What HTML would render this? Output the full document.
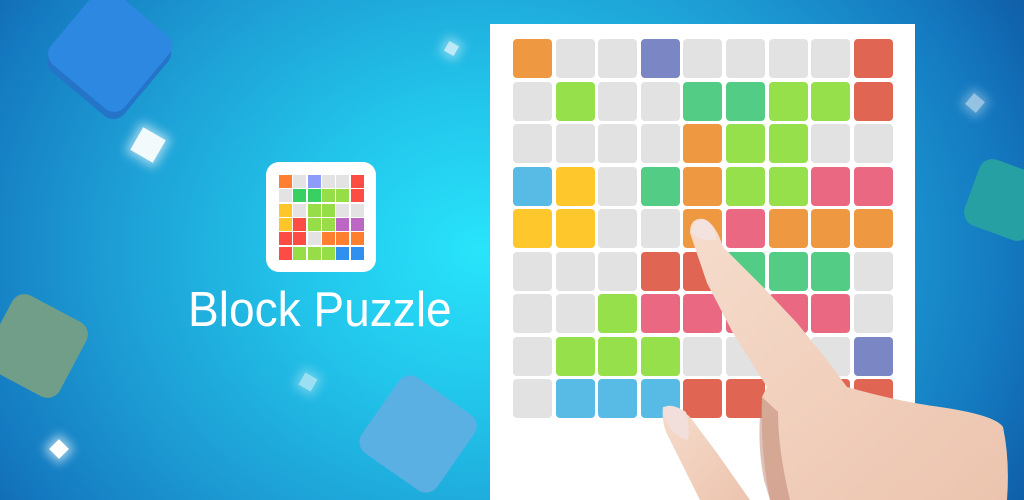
<!DOCTYPE html>
<html><head><meta charset="utf-8"><style>
*{margin:0;padding:0;box-sizing:border-box}
body{width:1024px;height:500px;overflow:hidden;position:relative;font-family:"Liberation Sans",sans-serif;
background:radial-gradient(ellipse 620px 520px at 480px 250px,#28e4fb 0%,#22c4ea 30%,#1d9dd4 60%,#1479c0 85%,#0f5ea8 100%);}
.d{position:absolute;border-radius:14px}
.g{position:absolute;background:#fff;box-shadow:0 0 10px 4px rgba(255,255,255,.6)}
#panel{position:absolute;left:490px;top:24px;width:425px;height:476px;background:#fff}
.c{position:absolute;width:39px;height:39px;border-radius:4px}
#icon{position:absolute;left:266px;top:162px;width:110px;height:110px;background:#fff;border-radius:13px}
.ic{position:absolute;width:13px;height:13px}
h1{position:absolute;left:188px;top:282px;font-size:49px;font-weight:normal;color:#fff;transform:scaleX(.94);transform-origin:left top;white-space:nowrap}
</style></head><body>
<div class="d" style="left:62px;top:2px;width:96px;height:96px;background:#2c88e0;transform:rotate(40deg);box-shadow:4px 6px 0 #2474c8"></div>
<div class="d" style="left:-6px;top:304px;width:84px;height:84px;background:#709e88;transform:rotate(28deg)"></div>
<div class="d" style="left:372px;top:388px;width:92px;height:92px;background:#5ab0e2;transform:rotate(35deg)"></div>
<div class="d" style="left:970px;top:165px;width:70px;height:70px;background:#26a0a2;transform:rotate(20deg)"></div>
<div class="g" style="left:135px;top:132px;width:26px;height:26px;transform:rotate(30deg);opacity:.95"></div>
<div class="g" style="left:446px;top:43px;width:11px;height:11px;transform:rotate(30deg);opacity:.7"></div>
<div class="g" style="left:52px;top:442px;width:14px;height:14px;transform:rotate(45deg)"></div>
<div class="g" style="left:301px;top:375px;width:14px;height:14px;transform:rotate(30deg);opacity:.55"></div>
<div class="g" style="left:968px;top:96px;width:14px;height:14px;transform:rotate(40deg);opacity:.55"></div>

<div id="icon"></div>
<h1>Block Puzzle</h1>
<div id="panel"></div>

<svg style="position:absolute;left:0;top:0" width="1024" height="500">
<defs><linearGradient id="sk" x1="0" y1="0" x2="1" y2="1"><stop offset="0" stop-color="#f6dccc"/><stop offset="1" stop-color="#ecc4ae"/></linearGradient></defs>
<path d="M690,233 Q690,217 704,219 Q716,224 723,247 L763,287 L797,323 L827,360 L847,387 Q900,402 940,407 Q995,415 1003,427 Q1010,460 1007,500 L770,500 Q760,450 762,397 L767,387 L733,333 L707,283 Z" fill="url(#sk)"/>
<path d="M762,397 Q756,440 764,480 L770,500 L790,500 Q778,450 778,412 Z" fill="#b47866" opacity=".45"/>
<path d="M663,407 Q676,404 690,417 L717,453 L750,500 L700,500 L670,440 Q661,425 663,407 Z" fill="url(#sk)"/>
<path d="M691,232 Q694,216 708,221 Q716,230 716,240 Q700,242 691,232 Z" fill="#f4e2de"/>
<path d="M663,408 Q670,402 686,412 Q690,425 688,440 Q668,436 663,408 Z" fill="#f2dedb"/>
</svg>

<script>
var C={O:'#ee9842',G:'#e2e2e2',P:'#7b87c5',R:'#e06552',L:'#96e04b',E:'#53cd86',B:'#58bbe6',Y:'#fec72c',K:'#ea6882'};
var rows=["OGGPGGGGR","GLGGEELLR","GGGGOLLGG","BYGEOLLKK","YYGGOKOOO","GGGRREEEG","GGLKKKKKG","GLLLGGGGP","GBBBRRRRR"];
var h='';
rows.forEach(function(r,i){for(var j=0;j<9;j++){h+='<div class="c" style="left:'+(513+j*42.6)+'px;top:'+(39+i*42.5)+'px;background:'+C[r[j]]+'"></div>';}});
var IC={O:'#fd7f2f',G:'#e3e3e3',P:'#8d9cf9',R:'#fd4c43',L:'#96dd47',E:'#38d063',Y:'#fec62b',V:'#bd67c5',B:'#3090f0'};
var ir=["OGPGGR","GEELLR","YGLLGG","YRLLVV","RRGOOO","RLLLBB"];
ir.forEach(function(r,i){for(var j=0;j<6;j++){h+='<div class="ic" style="left:'+(279+j*14.3)+'px;top:'+(175+i*14.3)+'px;background:'+IC[r[j]]+'"></div>';}});
var d=document.createElement('div');d.innerHTML=h;
document.body.insertBefore(d,document.querySelector('svg'));
</script>
</body></html>
